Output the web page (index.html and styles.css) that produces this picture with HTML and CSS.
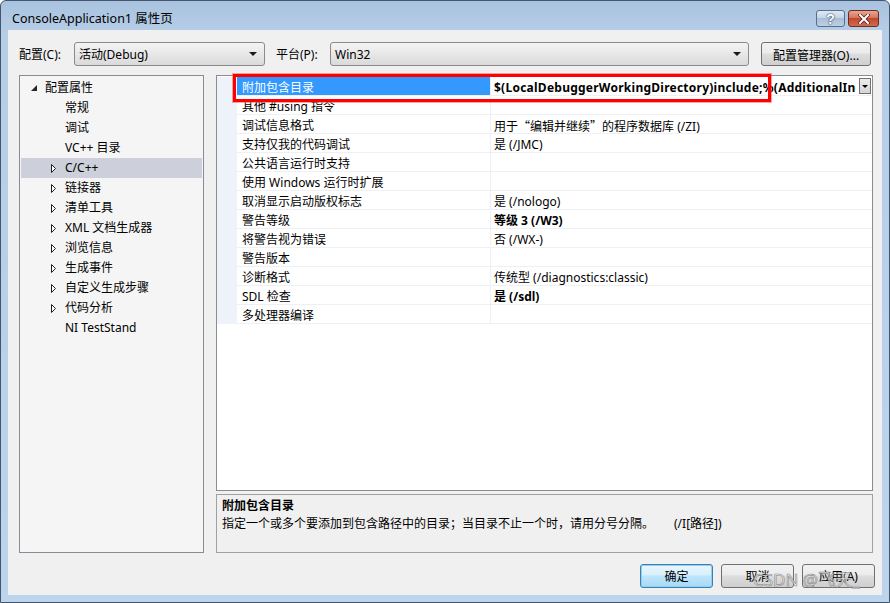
FILE: index.html
```html
<!DOCTYPE html>
<html lang="zh-CN">
<head>
  <meta charset="UTF-8" />
  <title>ConsoleApplication1 属性页</title>
  <link rel="stylesheet" href="styles.css">
</head>
<body>
  <div class="window">
    <div class="titlebar">
      <span class="caption">ConsoleApplication1 属性页</span>
      <div class="caption-btns">
        <button class="cap-btn help">?</button>
        <button class="cap-btn close">
          <svg width="12" height="10" viewBox="0 0 12 10">
            <path d="M2 1 L10 9 M10 1 L2 9" stroke="#4a1f17" stroke-width="3.4" stroke-linecap="square"/>
            <path d="M2 1 L10 9 M10 1 L2 9" stroke="#fff" stroke-width="2" stroke-linecap="square"/>
          </svg>
        </button>
      </div>
    </div>

    <div class="client">
      <div class="toolbar">
        <label class="lbl lbl-cfg">配置(C):</label>
        <div class="combo combo-cfg"><span>活动(Debug)</span><i class="arrow"></i></div>
        <label class="lbl lbl-plat">平台(P):</label>
        <div class="combo combo-plat"><span>Win32</span><i class="arrow"></i></div>
        <button class="btn btn-mgr">配置管理器(O)...</button>
      </div>

      <div class="main">
        <ul class="tree">
          <li class="lvl0"><span class="twisty"><svg width="6" height="6"><polygon points="6,0 6,6 0,6" fill="#262626"/></svg></span>配置属性</li>
          <li class="lvl1"><span class="twisty"></span>常规</li>
          <li class="lvl1"><span class="twisty"></span>调试</li>
          <li class="lvl1"><span class="twisty"></span>VC++ 目录</li>
          <li class="lvl1 selected"><span class="twisty"><svg width="6" height="9"><polygon points="0.5,0.5 4.5,4.5 0.5,8.5" fill="#fff" stroke="#1e1e1e"/></svg></span>C/C++</li>
          <li class="lvl1"><span class="twisty"><svg width="6" height="9"><polygon points="0.5,0.5 4.5,4.5 0.5,8.5" fill="#fff" stroke="#1e1e1e"/></svg></span>链接器</li>
          <li class="lvl1"><span class="twisty"><svg width="6" height="9"><polygon points="0.5,0.5 4.5,4.5 0.5,8.5" fill="#fff" stroke="#1e1e1e"/></svg></span>清单工具</li>
          <li class="lvl1"><span class="twisty"><svg width="6" height="9"><polygon points="0.5,0.5 4.5,4.5 0.5,8.5" fill="#fff" stroke="#1e1e1e"/></svg></span>XML 文档生成器</li>
          <li class="lvl1"><span class="twisty"><svg width="6" height="9"><polygon points="0.5,0.5 4.5,4.5 0.5,8.5" fill="#fff" stroke="#1e1e1e"/></svg></span>浏览信息</li>
          <li class="lvl1"><span class="twisty"><svg width="6" height="9"><polygon points="0.5,0.5 4.5,4.5 0.5,8.5" fill="#fff" stroke="#1e1e1e"/></svg></span>生成事件</li>
          <li class="lvl1"><span class="twisty"><svg width="6" height="9"><polygon points="0.5,0.5 4.5,4.5 0.5,8.5" fill="#fff" stroke="#1e1e1e"/></svg></span>自定义生成步骤</li>
          <li class="lvl1"><span class="twisty"><svg width="6" height="9"><polygon points="0.5,0.5 4.5,4.5 0.5,8.5" fill="#fff" stroke="#1e1e1e"/></svg></span>代码分析</li>
          <li class="lvl1"><span class="twisty"></span>NI TestStand</li>
        </ul>

        <div class="right">
          <div class="grid">
            <div class="row selected">
              <span class="gutter"></span>
              <span class="name">附加包含目录</span>
              <span class="value bold"><span class="text">$(LocalDebuggerWorkingDirectory)include;%(AdditionalIncludeDirectories)</span><i class="drop"></i></span>
            </div>
            <div class="row"><span class="gutter"></span><span class="name">其他 #using 指令</span><span class="value"></span></div>
            <div class="row"><span class="gutter"></span><span class="name">调试信息格式</span><span class="value">用于<span class="cjk">“</span>编辑并继续<span class="cjk">”</span>的程序数据库 (/ZI)</span></div>
            <div class="row"><span class="gutter"></span><span class="name">支持仅我的代码调试</span><span class="value">是 (/JMC)</span></div>
            <div class="row"><span class="gutter"></span><span class="name">公共语言运行时支持</span><span class="value"></span></div>
            <div class="row"><span class="gutter"></span><span class="name">使用 Windows 运行时扩展</span><span class="value"></span></div>
            <div class="row"><span class="gutter"></span><span class="name">取消显示启动版权标志</span><span class="value">是 (/nologo)</span></div>
            <div class="row"><span class="gutter"></span><span class="name">警告等级</span><span class="value bold">等级 3 (/W3)</span></div>
            <div class="row"><span class="gutter"></span><span class="name">将警告视为错误</span><span class="value">否 (/WX-)</span></div>
            <div class="row"><span class="gutter"></span><span class="name">警告版本</span><span class="value"></span></div>
            <div class="row"><span class="gutter"></span><span class="name">诊断格式</span><span class="value">传统型 (/diagnostics:classic)</span></div>
            <div class="row"><span class="gutter"></span><span class="name">SDL 检查</span><span class="value bold">是 (/sdl)</span></div>
            <div class="row"><span class="gutter"></span><span class="name">多处理器编译</span><span class="value"></span></div>

            <div class="mark"></div>
          </div>

          <div class="desc">
            <div class="desc-title">附加包含目录</div>
            <div class="desc-text">指定一个或多个要添加到包含路径中的目录；当目录不止一个时，请用分号分隔。<span class="switch">(/I[路径])</span></div>
          </div>
        </div>
      </div>

      <div class="buttons">
        <button class="btn default">确定</button>
        <button class="btn">取消</button>
        <button class="btn">应用(A)</button>
      </div>
    </div>

    <div class="watermark">CSDN @飞天_</div>
  </div>
</body>
</html>
```

FILE: styles.css
```css
* {
  box-sizing: border-box;
}

body {
  margin: 0;
  font-family: "Segoe UI", "Noto Sans", "Noto Sans CJK SC", sans-serif;
  font-size: 12px;
  color: #000;
  background: #fff;
}

.cjk {
  font-family: "Noto Sans CJK SC", sans-serif;
}

.window {
  position: relative;
  width: 890px;
  height: 603px;
  border: 1px solid #44566b;
  border-radius: 6px 6px 0 0;
  background: linear-gradient(to bottom, #a8c2df 0, #b6cde7 30px, #bcd4ec 100%);
  padding: 0 7px 7px 7px;
  display: flex;
  flex-direction: column;
}

/* title bar */
.titlebar {
  height: 29px;
  display: flex;
  justify-content: space-between;
  align-items: flex-start;
}

.caption {
  margin: 9px 0 0 4px;
  font-size: 12.5px;
  line-height: 18px;
}

.caption-btns {
  display: flex;
  gap: 3px;
  margin: 9px 3px 0 0;
}

.cap-btn {
  height: 17px;
  border-radius: 3px;
  padding: 0;
  display: flex;
  align-items: center;
  justify-content: center;
  font-family: "Liberation Sans", sans-serif;
}

.cap-btn.help {
  width: 29px;
  border: 1px solid #566e8a;
  background: linear-gradient(to bottom, #dfe9f4 0, #c4d5e8 45%, #a9bfd8 50%, #bccfe4 100%);
  color: #fff;
  font-size: 14px;
  font-weight: bold;
  text-shadow: 0 0 2px #2c3e55, 0 0 1px #2c3e55;
}

.cap-btn.close {
  width: 31px;
  border: 1px solid #6b2b1f;
  background: linear-gradient(to bottom, #e7a592 0, #d6765e 45%, #c4472d 50%, #d16a50 100%);
}

/* client area */
.client {
  flex: 1;
  background: #f0f0f0;
  padding: 12px 9px 7px 11px;
  display: flex;
  flex-direction: column;
}

.toolbar {
  height: 24px;
  display: flex;
  align-items: flex-start;
}

.lbl {
  line-height: 26px;
}

.lbl-cfg {
  width: 55px;
}

.lbl-plat {
  width: 54px;
  margin-left: 11px;
}

.combo {
  position: relative;
  height: 24px;
  border: 1px solid #8a8a8a;
  border-radius: 3px;
  background: linear-gradient(to bottom, #f4f4f4, #e6e6e6 55%, #dadada);
  padding-left: 4px;
  line-height: 24px;
}

.combo-cfg {
  width: 191px;
}

.combo-plat {
  width: 419px;
}

.arrow {
  position: absolute;
  right: 7px;
  top: 9px;
  border-left: 4px solid transparent;
  border-right: 4px solid transparent;
  border-top: 4px solid #1a1a1a;
}

.btn {
  height: 24px;
  border: 1px solid #707070;
  border-radius: 3px;
  background: linear-gradient(to bottom, #f2f2f2 0, #ebebeb 45%, #dddddd 50%, #cfcfcf 100%);
  font-family: inherit;
  font-size: 12px;
  color: #000;
  padding: 2px 0 0;
}

.btn-mgr {
  width: 110px;
  margin-left: 12px;
}

/* main area */
.main {
  height: 478px;
  margin-top: 9px;
  display: flex;
  gap: 12px;
}

.tree {
  width: 185px;
  margin: 0;
  padding: 2px 1px 0 1px;
  list-style: none;
  border: 1px solid #898c95;
  background: #f5f5f5;
}

.tree li {
  height: 20px;
  line-height: 20px;
  display: flex;
  align-items: center;
}

.tree .lvl0 {
  padding-left: 8px;
}

.tree .lvl1 {
  padding-left: 28px;
}

.tree .selected {
  background: #cdd0da;
}

.twisty {
  width: 16px;
  height: 20px;
  display: flex;
  align-items: center;
  padding-left: 2px;
}

.right {
  width: 657px;
  display: flex;
  flex-direction: column;
  gap: 3px;
}

.grid {
  position: relative;
  height: 416px;
  border: 1px solid #898c95;
  background: #fff;
  padding-top: 1px;
}

.row {
  display: grid;
  grid-template-columns: 20px 254px 1fr;
  grid-template-rows: 19px;
  height: 19px;
  line-height: 22px;
}

.gutter {
  background: #eef3fa;
}

.name {
  padding-left: 5px;
  border-bottom: 1px solid #eef0f3;
  border-right: 1px solid #eef0f3;
  white-space: nowrap;
}

.value {
  position: relative;
  padding-left: 3px;
  border-bottom: 1px solid #eef0f3;
  white-space: nowrap;
  overflow: hidden;
}

.bold {
  font-weight: bold;
}

.row.selected .name {
  background: #3399ff;
  color: #fff;
}

.value .text {
  display: block;
  width: 362px;
  overflow: hidden;
  letter-spacing: 0.25px;
}

.drop {
  position: absolute;
  right: 1px;
  top: 1px;
  width: 12px;
  height: 16px;
  border: 1px solid #707070;
  background: linear-gradient(to bottom, #ececec, #d6d6d6);
}

.drop::after {
  content: "";
  position: absolute;
  left: 2px;
  top: 6px;
  border-left: 3px solid transparent;
  border-right: 3px solid transparent;
  border-top: 3px solid #000;
}

/* red highlight drawn over the first row */
.mark {
  position: absolute;
  left: 16px;
  top: -2px;
  width: 538px;
  height: 28px;
  border: 3px solid #ff0000;
  box-shadow: 0 0 0 1px rgba(255, 70, 70, 0.5);
}

.desc {
  height: 59px;
  border: 1px solid #a0a0a0;
  background: #f0f0f0;
  padding: 2px 5px;
  line-height: 18px;
}

.desc-title {
  font-weight: bold;
}

.switch {
  margin-left: 20px;
}

.buttons {
  margin-top: 11px;
  margin-right: -2px;
  display: flex;
  justify-content: flex-end;
  gap: 8px;
}

.buttons .btn {
  width: 73px;
  padding-top: 0;
}

.buttons .btn.default {
  border-color: #3c7fb1;
  background: linear-gradient(to bottom, #eaf6fd 0, #d9f0fc 45%, #bee6fd 50%, #a7d9f5 100%);
  box-shadow: inset 0 0 0 1px #8fd0f3;
}

.watermark {
  position: absolute;
  left: 752px;
  top: 568px;
  font-size: 17px;
  line-height: 22px;
  color: rgba(235, 235, 235, 0.85);
  -webkit-text-stroke: 0.6px rgba(110, 110, 110, 0.8);
  pointer-events: none;
}
```
